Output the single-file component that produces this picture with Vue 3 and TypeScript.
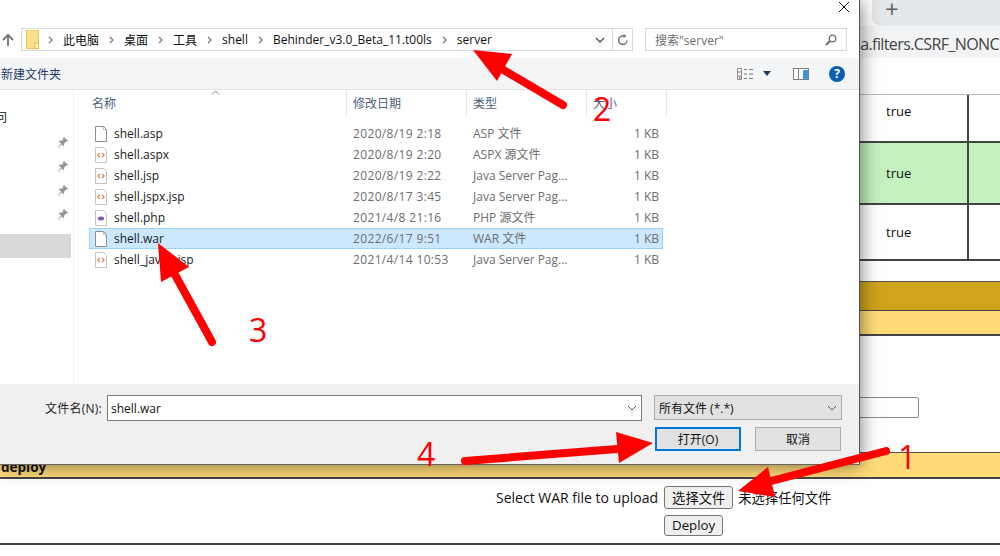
<script setup lang="ts">
interface FileRow {
  name: string;
  date: string;
  type: string;
  size: string;
  icon: 'blank' | 'code' | 'php';
  selected?: boolean;
}

const crumbs = ['此电脑', '桌面', '工具', 'shell', 'Behinder_v3.0_Beta_11.t00ls', 'server'];

const files: FileRow[] = [
  { name: 'shell.asp', date: '2020/8/19 2:18', type: 'ASP 文件', size: '1 KB', icon: 'blank' },
  { name: 'shell.aspx', date: '2020/8/19 2:20', type: 'ASPX 源文件', size: '1 KB', icon: 'code' },
  { name: 'shell.jsp', date: '2020/8/19 2:22', type: 'Java Server Pag...', size: '1 KB', icon: 'code' },
  { name: 'shell.jspx.jsp', date: '2020/8/17 3:45', type: 'Java Server Pag...', size: '1 KB', icon: 'code' },
  { name: 'shell.php', date: '2021/4/8 21:16', type: 'PHP 源文件', size: '1 KB', icon: 'php' },
  { name: 'shell.war', date: '2022/6/17 9:51', type: 'WAR 文件', size: '1 KB', icon: 'blank', selected: true },
  { name: 'shell_java9.jsp', date: '2021/4/14 10:53', type: 'Java Server Pag...', size: '1 KB', icon: 'code' }
];

const pins = [0, 1, 2, 3];
</script>

<template>
  <div class="page">
    <!-- browser behind the dialog -->
    <div class="tabbar"><div class="new-tab">+</div></div>
    <div class="urlbar"><span class="url">na.filters.CSRF_NONC</span></div>

    <div class="grid-row first"><div class="cell">true</div><div class="cell-r"></div></div>
    <div class="grid-row green"><div class="cell">true</div><div class="cell-r"></div></div>
    <div class="grid-row third"><div class="cell">true</div><div class="cell-r"></div></div>

    <div class="band-gold"></div>
    <div class="band-yellow"></div>
    <div class="param"><div class="param-input"></div></div>
    <div class="band-deploy">deploy</div>

    <div class="upload">
      <div class="upload-line">
        <span>Select WAR file to upload</span>
        <button class="btn">选择文件</button>
        <span class="no-file">未选择任何文件</span>
      </div>
      <button class="btn deploy-btn">Deploy</button>
    </div>

    <!-- file dialog -->
    <div class="dialog">
      <div class="titlebar">
        <svg width="12" height="12" viewBox="0 0 12 12"><path d="M1 1l10 10M11 1L1 11" stroke="#111" stroke-width="1" fill="none" /></svg>
      </div>

      <div class="addr-row">
        <svg class="up" width="12" height="14" viewBox="0 0 12 14"><path d="M6 13V2M1 7l5-5 5 5" stroke="#7a7a7a" stroke-width="2" fill="none" /></svg>
        <div class="addr">
          <svg class="folder" width="13" height="19" viewBox="0 0 13 19">
            <rect x="0.5" y="0.5" width="12" height="18" fill="#fde08c" stroke="#efc95f" />
            <rect x="9" y="13" width="3.5" height="5.5" fill="#fff4c9" stroke="#e6b93e" />
          </svg>
          <template v-for="c in crumbs" :key="c">
            <svg class="chev" width="5" height="8" viewBox="0 0 5 8"><path d="M1 1l3 3-3 3" stroke="#808080" stroke-width="1.4" fill="none" /></svg>
            <span class="crumb">{{ c }}</span>
          </template>
          <div class="addr-end">
            <svg width="10" height="6" viewBox="0 0 10 6"><path d="M1 1l4 4 4-4" stroke="#606060" stroke-width="1.5" fill="none" /></svg>
            <div class="refresh">
              <svg width="12" height="12" viewBox="0 0 12 12"><path d="M10 6.5A4.2 4.2 0 1 1 6 2h2" stroke="#707070" stroke-width="1.5" fill="none" /><path d="M6.500 0l3 2-3 2z" fill="#707070" /></svg>
            </div>
          </div>
        </div>
        <div class="search">
          <span>搜索"server"</span>
          <svg width="12" height="12" viewBox="0 0 12 12"><circle cx="7.500" cy="4.500" r="3.300" stroke="#707070" stroke-width="1.3" fill="none" /><path d="M5 7L1 11" stroke="#707070" stroke-width="2" /></svg>
        </div>
      </div>

      <div class="toolbar">
        <span class="new-folder">新建文件夹</span>
        <div class="tools">
          <svg width="16" height="12" viewBox="0 0 16 12">
            <path d="M0.500 0.500h4v11h-4zM0.500 4h4M0.500 8h4" stroke="#8a8a8a" fill="none" />
            <path d="M7 1.500h3M12 1.500h4M7 6h3M12 6h4M7 10.500h3M12 10.500h4" stroke="#777" />
            <rect x="2" y="9" width="1.500" height="1.500" fill="#c44" />
          </svg>
          <svg class="caret" width="8" height="5" viewBox="0 0 8 5"><path d="M0 0h8L4 5z" fill="#1f3a5f" /></svg>
          <svg class="pane-ico" width="16" height="12" viewBox="0 0 16 12">
            <rect x="0.500" y="0.500" width="15" height="11" fill="#fff" stroke="#7f7f7f" />
            <path d="M5.500 0.500v11" stroke="#7f7f7f" />
            <rect x="10" y="2" width="5" height="9" fill="#3d95e0" />
          </svg>
          <div class="help">?</div>
        </div>
      </div>

      <div class="body">
        <div class="nav">
          <div class="nav-label">问</div>
          <svg v-for="p in pins" :key="p" class="pin" width="11" height="11" viewBox="0 0 11 11">
            <path d="M6 0L10 4L9 5L8 4.600L6.200 6.400L6.200 8.400L5.400 9.200L.8 4.600L1.600 3.800L3.600 3.800L5.400 2L5 1z" fill="#8f979e" />
            <path d="M3.200 7L.5 10.500" stroke="#8f979e" />
          </svg>
          <div class="nav-sel"></div>
        </div>
        <div class="list">
          <div class="list-head">
            <div class="col-name">名称<svg class="sort" width="9" height="5" viewBox="0 0 9 5"><path d="M1 4.500l3.500-3.500 3.500 3.500" stroke="#888" fill="none" /></svg></div>
            <div class="col-date">修改日期</div>
            <div class="col-type">类型</div>
            <div class="col-size">大小</div>
          </div>
          <div v-for="f in files" :key="f.name" class="file" :class="{ selected: f.selected }">
            <div class="col-name name-cell">
              <svg v-if="f.icon === 'blank'" width="12" height="16" viewBox="0 0 12 16">
                <path d="M.5.5h8l3 3v12H.5z" fill="#fff" stroke="#8d8d8d" />
                <path d="M8.500.5v3h3" fill="none" stroke="#bdbdbd" />
              </svg>
              <svg v-else width="12" height="16" viewBox="0 0 12 16">
                <path d="M.5.5h8l3 3v12H.5z" fill="#fff" stroke="#c4c4c4" />
                <path v-if="f.icon === 'code'" d="M5 6L2.800 8 5 10M7 6l2.200 2L7 10" fill="none" stroke="#d8834a" stroke-width="1.100" />
                <ellipse v-else cx="6" cy="8.500" rx="3.200" ry="2" fill="#8259b8" />
              </svg>
              <span>{{ f.name }}</span>
            </div>
            <div class="col-date date-cell">{{ f.date }}</div>
            <div class="col-type">{{ f.type }}</div>
            <div class="col-size size-cell">{{ f.size }}</div>
          </div>
        </div>
      </div>

      <div class="footer">
        <div class="foot-row">
          <label class="foot-label">文件名(N):</label>
          <div class="name-input">
            <span>shell.war</span>
            <svg width="10" height="6" viewBox="0 0 10 6"><path d="M1 1l4 4 4-4" stroke="#555" fill="none" /></svg>
          </div>
          <div class="filter">
            <span>所有文件 (*.*)</span>
            <svg width="10" height="6" viewBox="0 0 10 6"><path d="M1 1l4 4 4-4" stroke="#555" fill="none" /></svg>
          </div>
        </div>
        <div class="foot-actions">
          <button class="win-btn primary">打开(O)</button>
          <button class="win-btn">取消</button>
        </div>
      </div>
    </div>

    <!-- red annotations drawn on the screenshot -->
    <svg class="marks" width="1000" height="556" viewBox="0 0 1000 556">
      <g stroke="#fe0000" stroke-width="8" stroke-linecap="round" fill="none">
        <path d="M563 105L490 62" />
        <path d="M212 342L168 262" />
        <path d="M465 461L630 448" />
        <path d="M886 451L760 484" />
      </g>
      <g fill="#fe0000">
        <path d="M473 50L512 54L497 81z" />
        <path d="M158 243L189 267L161 282z" />
        <path d="M653 443L616 432L619 463z" />
        <path d="M738 491L768 467L775 497z" />
      </g>
    </svg>
    <span class="num n1">1</span>
    <span class="num n2">2</span>
    <span class="num n3">3</span>
    <span class="num n4">4</span>
  </div>
</template>

<style scoped>
.page {
  position: relative;
  width: 1000px;
  height: 556px;
  overflow: hidden;
  background: #fff;
  font-family: "Open Sans", "Noto Sans CJK SC", sans-serif;
  color: #111;
}

.page * {
  box-sizing: border-box;
}

.tabbar {
  height: 26px;
  padding-left: 872px;
}

.new-tab {
  height: 26px;
  background: #e5e8eb;
  border-bottom-left-radius: 8px;
  padding-left: 13px;
  font-size: 24px;
  line-height: 18px;
  color: #5f6368;
}

.urlbar {
  height: 32px;
  background: #f1f3f4;
  padding-left: 851px;
  margin-bottom: 36px;
  white-space: nowrap;
  overflow: hidden;
}

.url {
  font-size: 16px;
  letter-spacing: -0.6px;
  line-height: 36px;
  color: #444;
}

.grid-row {
  display: grid;
  grid-template-columns: 969px 1fr;
  border-bottom: 2px solid #444;
}

.grid-row.first {
  border-top: 1px solid #bbb;
  height: 49px;
}

.grid-row.first .cell {
  padding-bottom: 14px;
}

.grid-row.green {
  height: 62px;
  background: #c3f2c0;
}

.grid-row.third {
  height: 56px;
  margin-bottom: 20px;
}

.cell {
  padding-left: 886px;
  border-right: 2px solid #444;
  font-size: 13px;
  display: flex;
  align-items: center;
  color: #111;
}

.band-gold {
  height: 30px;
  background: #d0a31c;
  border-top: 1px solid #555;
  border-bottom: 1px solid #444;
}

.band-yellow {
  height: 25px;
  background: #ffdb78;
  border-bottom: 2px solid #444;
}

.param {
  height: 116px;
  padding: 61px 0 0 800px;
}

.param-input {
  width: 119px;
  height: 21px;
  border: 1px solid #8a8a8a;
  border-radius: 2px;
}

.band-deploy {
  height: 27px;
  background: #ffdb78;
  border-top: 1px solid #555;
  border-bottom: 2px solid #444;
  font-size: 13.5px;
  font-weight: 700;
  line-height: 28px;
  padding-left: 1px;
}

.upload {
  height: 66px;
  border-bottom: 2px solid #444;
  padding: 7px 0 0 496px;
  font-size: 14px;
}

.upload-line {
  display: flex;
  align-items: center;
  gap: 6px;
}

.no-file {
  margin-left: -1px;
  font-size: 13.3px;
}

.btn {
  font: inherit;
  font-size: 13.3px;
  height: 23px;
  padding: 0 7px;
  background: #efefef;
  border: 1px solid #767676;
  border-radius: 3px;
  color: #111;
}

.deploy-btn {
  display: block;
  height: 21px;
  margin: 6px 0 0 168px;
  line-height: 17px;
}

.dialog {
  position: absolute;
  left: 0;
  top: 0;
  width: 860px;
  height: 465px;
  background: #fff;
  border-right: 1px solid #555;
  border-bottom: 1px solid #666;
  box-shadow: 0 0 18px rgba(0, 0, 0, 0.55);
  display: flex;
  flex-direction: column;
  font-size: 12px;
}

.titlebar {
  height: 28px;
  flex-shrink: 0;
  display: flex;
  justify-content: flex-end;
  padding: 1px 9px 0 0;
}

.addr-row {
  display: flex;
  height: 23px;
  flex-shrink: 0;
  margin-bottom: 7px;
}

.up {
  margin: 5px 7px 0 2px;
}

.addr {
  width: 612px;
  border: 1px solid #d9d9d9;
  display: flex;
  align-items: center;
  padding-left: 4px;
  color: #111;
}

.folder {
  margin-right: 9px;
}

.chev {
  margin-right: 10px;
}

.crumb {
  margin-right: 10px;
  white-space: nowrap;
}

.addr-end {
  margin-left: auto;
  display: flex;
  align-items: center;
  height: 100%;
  gap: 7px;
}

.refresh {
  width: 20px;
  height: 100%;
  border-left: 1px solid #d9d9d9;
  display: flex;
  align-items: center;
  justify-content: center;
}

.search {
  margin-left: 12px;
  width: 202px;
  border: 1px solid #d9d9d9;
  display: flex;
  align-items: center;
  justify-content: space-between;
  padding: 0 9px;
  color: #6d6d6d;
}

.toolbar {
  height: 32px;
  flex-shrink: 0;
  background: #f4f5f7;
  border-bottom: 1px solid #e4e4e4;
  display: flex;
  align-items: center;
  padding-left: 1px;
}

.new-folder {
  color: #1f3a68;
}

.tools {
  margin-left: auto;
  display: flex;
  align-items: center;
  padding-right: 14px;
}

.caret {
  margin-left: 10px;
}

.pane-ico {
  margin-left: 22px;
}

.help {
  margin-left: 20px;
  width: 16px;
  height: 16px;
  border-radius: 50%;
  background: #0a5eb5;
  color: #fff;
  font-weight: 700;
  font-size: 12px;
  line-height: 16px;
  text-align: center;
}

.body {
  flex: 1;
  display: flex;
  min-height: 0;
}

.nav {
  position: relative;
  width: 74px;
  border-right: 1px solid #f0f0f0;
  flex-shrink: 0;
}

.nav-label {
  position: absolute;
  left: -5px;
  top: 18px;
}

.pin {
  position: absolute;
  left: 58px;
}

.pin:nth-of-type(1) { top: 47px; }
.pin:nth-of-type(2) { top: 71px; }
.pin:nth-of-type(3) { top: 95px; }
.pin:nth-of-type(4) { top: 119px; }

.nav-sel {
  position: absolute;
  left: 0;
  top: 144px;
  width: 71px;
  height: 24px;
  background: #d9d9d9;
}

.list {
  flex: 1;
  padding-left: 15px;
}

.list-head {
  display: flex;
  height: 27px;
  margin-bottom: 6px;
  line-height: 27px;
  color: #4c607a;
}

.list-head > div {
  border-right: 1px solid #e5e5e5;
  position: relative;
}

.col-name {
  width: 258px;
  padding-left: 3px;
  flex-shrink: 0;
}

.col-date {
  width: 120px;
  padding-left: 6px;
  flex-shrink: 0;
}

.col-type {
  width: 120px;
  padding-left: 6px;
  flex-shrink: 0;
  white-space: nowrap;
}

.col-size {
  width: 80px;
  padding-left: 6px;
  flex-shrink: 0;
}

.sort {
  position: absolute;
  left: 122px;
  top: 0;
}

.file {
  display: flex;
  width: 574px;
  height: 21px;
  line-height: 19px;
  border: 1px solid transparent;
  color: #6d6d6d;
}

.file.selected {
  background: #cce8ff;
  border-color: #99d1ff;
}

.name-cell {
  display: flex;
  align-items: center;
  gap: 7px;
  padding-left: 5px;
  color: #1a1a1a;
}

.file .col-name {
  width: 257px;
}

.date-cell {
  letter-spacing: 0.35px;
}

.file .size-cell {
  width: 75px;
  text-align: right;
  padding-right: 3px;
}

.footer {
  height: 80px;
  flex-shrink: 0;
  background: #f0f0f0;
  padding-top: 11px;
}

.foot-row {
  display: flex;
  height: 26px;
}

.foot-label {
  width: 107px;
  padding: 4px 5px 0 0;
  text-align: right;
  letter-spacing: 0.25px;
  color: #222;
}

.name-input {
  width: 535px;
  background: #fff;
  border: 1px solid #7a7a7a;
  display: flex;
  align-items: center;
  justify-content: space-between;
  padding: 0 4px 0 3px;
  color: #111;
}

.filter {
  margin-left: 12px;
  width: 188px;
  height: 25px;
  background: #e1e1e1;
  border: 1px solid #adadad;
  display: flex;
  align-items: center;
  justify-content: space-between;
  padding: 0 4px;
  color: #111;
}

.foot-actions {
  display: flex;
  justify-content: flex-end;
  gap: 14px;
  margin-top: 6px;
  padding-right: 18px;
}

.win-btn {
  width: 86px;
  height: 24px;
  padding: 0;
  font: inherit;
  background: #e1e1e1;
  border: 1px solid #adadad;
  color: #111;
}

.win-btn.primary {
  border: 2px solid #0078d7;
}

.marks {
  position: absolute;
  left: 0;
  top: 0;
}

.num {
  position: absolute;
  font-size: 32px;
  line-height: 32px;
  color: #fe0000;
}

.n1 { left: 898px; top: 441px; }
.n2 { left: 593px; top: 93px; }
.n3 { left: 249px; top: 314px; }
.n4 { left: 417px; top: 438px; }
</style>
